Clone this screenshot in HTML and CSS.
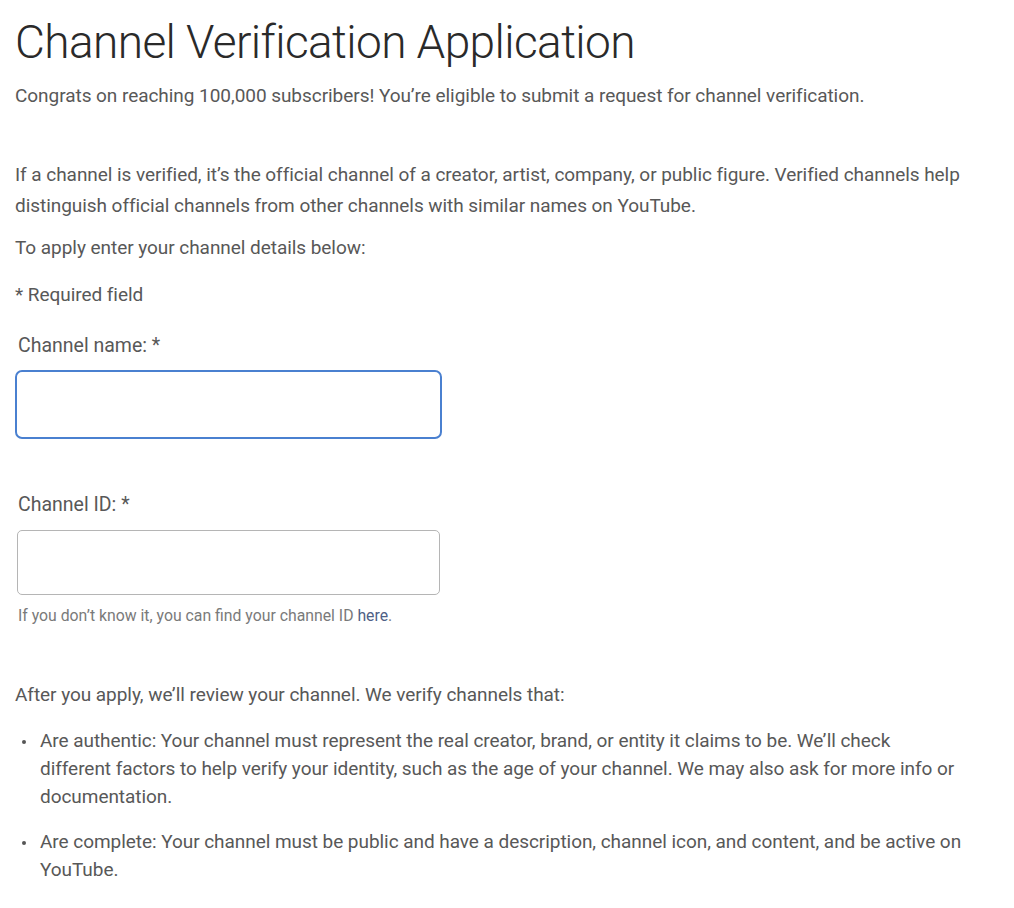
FILE: index.html
```html
<!DOCTYPE html>
<html lang="en">
<head>
<meta charset="utf-8">
<title>Channel Verification Application</title>
<link rel="stylesheet" href="styles.css">
</head>
<body>
<main class="page">
  <h1 class="title">Channel Verification Application</h1>
  <p class="intro">Congrats on reaching 100,000 subscribers! You’re eligible to submit a request for channel verification.</p>
  <p class="text para-wide">If a channel is verified, it’s the official channel of a creator, artist, company, or public figure. Verified channels help distinguish official channels from other channels with similar names on YouTube.</p>
  <p class="text apply">To apply enter your channel details below:</p>
  <p class="text required">* Required field</p>
  <div class="field field-name">
    <label class="label" for="cname">Channel name: *</label>
    <input class="input input-focus" id="cname" type="text">
  </div>
  <div class="field field-id">
    <label class="label" for="cid">Channel ID: *</label>
    <input class="input input-plain" id="cid" type="text">
    <p class="help">If you don’t know it, you can find your channel ID <a class="link" href="#">here</a>.</p>
  </div>
  <p class="text after">After you apply, we’ll review your channel. We verify channels that:</p>
  <ul class="list">
    <li class="item"><span class="dot"></span><span class="item-text">Are authentic: Your channel must represent the real creator, brand, or entity it claims to be. We’ll check different factors to help verify your identity, such as the age of your channel. We may also ask for more info or documentation.</span></li>
    <li class="item"><span class="dot"></span><span class="item-text">Are complete: Your channel must be public and have a description, channel icon, and content, and be active on YouTube.</span></li>
  </ul>
</main>
</body>
</html>
```

FILE: styles.css
```css
html, body {
  margin: 0;
  padding: 0;
  background: #ffffff;
}
body {
  font-family: Roboto, "Liberation Sans", sans-serif;
  color: #585858;
}
.page {
  padding: 14px 0 0 15px;
  width: 955px;
}
.title {
  margin: 0;
  font-family: Roboto, sans-serif;
  font-weight: 300;
  font-size: 46px;
  line-height: 56px;
  color: #2a2a2a;
  letter-spacing: -0.6px;
}
.intro, .text {
  font-size: 19px;
  line-height: 30px;
  margin: 0;
  letter-spacing: -0.05px;
}
.intro { margin-top: 11px; }
.text.para-wide { margin-top: 48px; line-height: 31px; }
.text.apply { margin-top: 12px; }
.text.required { margin-top: 17px; }
.field { display: flex; flex-direction: column; align-items: flex-start; }
.field-name { margin-top: 21px; }
.label {
  font-size: 19.5px;
  line-height: 30px;
  padding-left: 3px;
}
.input {
  box-sizing: border-box;
  background: #fff;
  font: inherit;
}
.input-focus {
  margin-top: 9px;
  width: 427px;
  height: 69px;
  border: 2px solid #4a80d0;
  border-radius: 7px;
  outline: none;
}
.field-id { margin-top: 51px; }
.input-plain {
  margin: 10px 0 0 2px;
  width: 423px;
  height: 65px;
  border: 1px solid #b5b5b5;
  border-radius: 5px;
}
.help {
  margin: 12px 0 0 3px;
  font-size: 15.8px;
  line-height: 18px;
  color: #7a7a7a;
}
.link { color: #4f5f86; text-decoration: none; }
.text.after { margin-top: 55px; }
.list {
  list-style: none;
  margin: 17px 0 0 0;
  padding: 0;
  width: 949px;
  font-size: 19px;
  line-height: 28px;
  letter-spacing: -0.05px;
}
.item {
  display: flex;
  align-items: flex-start;
  margin-bottom: 17px;
}
.dot {
  flex: none;
  width: 4px;
  height: 4px;
  border-radius: 50%;
  background: #555;
  margin: 13px 14px 0 7px;
}
.item-text { flex: 1; }
```
